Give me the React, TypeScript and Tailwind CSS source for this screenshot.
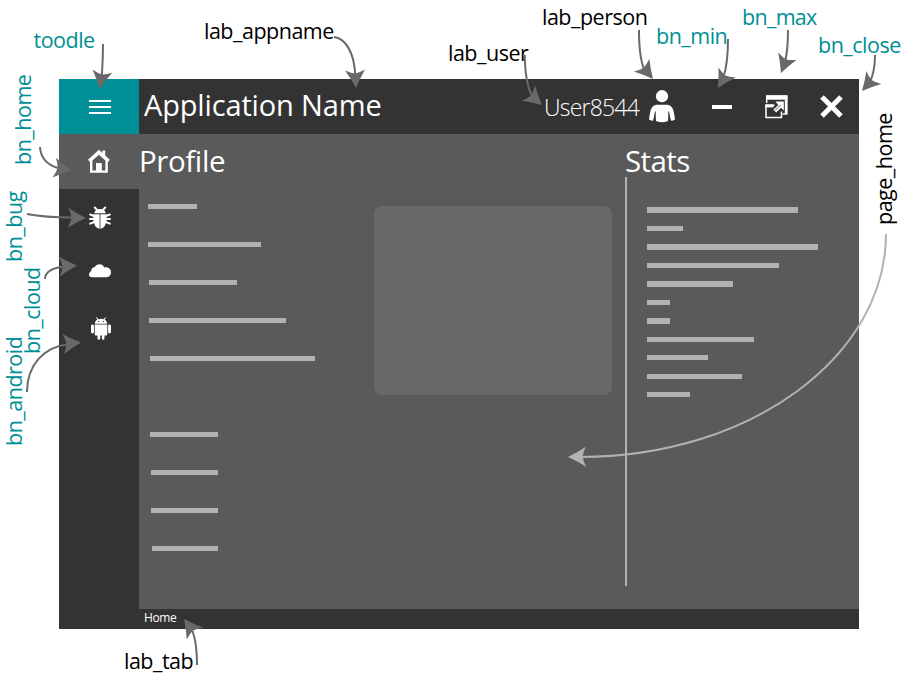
type Bar = { y: number; x: number; end: number };

const profileBars: Bar[] = [
  { y: 204, x: 147.6, end: 196.6 },
  { y: 242, x: 148, end: 260.6 },
  { y: 280, x: 148.6, end: 236.6 },
  { y: 318, x: 149, end: 285.6 },
  { y: 356, x: 149.6, end: 314.6 },
  { y: 432, x: 150.4, end: 217.6 },
  { y: 470, x: 151, end: 217.6 },
  { y: 508, x: 151.4, end: 217.6 },
  { y: 546, x: 152, end: 217.6 },
];

const statWidths = [151, 35.6, 170.6, 131.6, 85.6, 22.6, 22.6, 106.6, 60.6, 94.6, 42.6];

const arrows = [
  { line: "M103 44 Q103 60 101.8 76", tip: [99.5, 89], back: [102.3, 72] },
  { line: "M334 37 C345 38 354 52 355.2 74", tip: [356, 88], back: [355, 70.5] },
  { line: "M524.8 55 Q525 82 532 96", tip: [542, 105], back: [529.2, 93.8] },
  { line: "M639 30 Q639 57 644 69", tip: [653, 79], back: [642.3, 66] },
  { line: "M728 39 Q728 63 723.5 77", tip: [718, 88], back: [726.5, 73.5] },
  { line: "M788 30 Q788 48 785.5 60", tip: [781, 73], back: [787, 57.5] },
  { line: "M875 55 Q875 71 870 82", tip: [862, 91], back: [873, 78.5] },
  { line: "M40 147 Q41 163 58 168", tip: [72, 170.5], back: [54, 167.5] },
  { line: "M27 214 Q45 217.5 72 217.5", tip: [86, 218], back: [68, 217.7] },
  { line: "M45 279 Q45 269 64 266.5", tip: [77, 265.5], back: [60.5, 266.5] },
  { line: "M27 392 C27 364 45 347 67 344.5", tip: [81, 342.5], back: [64, 344] },
  { line: "M197 665 Q197 643 192.5 631", tip: [184, 619], back: [194.5, 633] },
];

function Arrow({ line, tip, back, color = "#696969" }: { line: string; tip: number[]; back: number[]; color?: string }) {
  const angle = (Math.atan2(back[1] - tip[1], back[0] - tip[0]) * 180) / Math.PI;
  return (
    <g>
      <path d={line} fill="none" stroke={color} strokeWidth="2" />
      <path
        d="M0 0 Q10 -4.8 18 -10 Q15 -4 14.6 0 Q15 4 18 10 Q10 4.8 0 0Z"
        fill={color}
        transform={`translate(${tip[0]} ${tip[1]}) rotate(${angle})`}
      />
    </g>
  );
}

const teal = "text-[#008f96]";
const labelBase = "absolute whitespace-pre text-[21.5px] leading-[22px] tracking-[-0.5px]";
const labels = [
  ["toodle", `${teal} left-[33.5px] top-[29px] tracking-[-0.2px]`],
  ["lab_appname", "text-black left-[204px] top-[20px]"],
  ["lab_user", "text-black left-[448px] top-[42px]"],
  ["lab_person", "text-black left-[542px] top-[6px]"],
  ["bn_min", `${teal} left-[656px] top-[25px]`],
  ["bn_max", `${teal} left-[742px] top-[6px] tracking-[-0.7px]`],
  ["bn_close", `${teal} left-[818px] top-[34px]`],
  ["lab_tab", "text-black left-[124px] top-[650px]"],
  ["bn_home", `${teal} left-[12px] top-[165px] origin-top-left -rotate-90`],
  ["bn_bug", `${teal} left-[3px] top-[262px] origin-top-left -rotate-90`],
  ["bn_cloud", `${teal} left-[21px] top-[354px] origin-top-left -rotate-90`],
  ["bn_android", `${teal} left-[3px] top-[446px] origin-top-left -rotate-90`],
  ["page_home", "text-black left-[873px] top-[225px] origin-top-left -rotate-90"],
];

function HomeIcon() {
  return (
    <svg width="22" height="24" viewBox="0 0 22 24" fill="white">
      <path d="M10.9 .8 14.4 4V1.5h2.8v5.1l4.6 4.2-1.6 2L10.9 4.4 1.6 12.8 0 10.8Z" />
      <path fillRule="evenodd" d="M2 11.6 10.9 3.6l8.9 8V23.8H2ZM4.4 11.6V21.6H8V14.2h5.6v7.4h3.8V11.6L10.9 5.8Z" />
      <path d="M8 14.2h5.6V22H8z" />
    </svg>
  );
}

function BugIcon() {
  return (
    <svg width="22" height="23" viewBox="0 0 22 23" fill="none" stroke="white">
      <path d="M8.2 4.2 5.8 1.5M13.8 4.2l2.4-2.7" strokeWidth="2" strokeLinecap="round" />
      <path d="M5.2 7.3Q6 3 11 3t5.8 4.3Z" fill="white" stroke="none" />
      <path d="M10.6 8.2v14.6C6 22 3.9 17 4.3 8.2ZM11.4 8.2v14.6C16 22 18.1 17 17.7 8.2Z" fill="white" stroke="none" />
      <path d="M5 10 1.2 8.5M5 13H1M5.2 16 1.2 17.6M17 10l3.8-1.5M17 13h4M16.8 16l4 1.6" strokeWidth="2" strokeLinecap="round" />
    </svg>
  );
}

function CloudIcon() {
  return (
    <svg width="22" height="14" viewBox="0 0 22 14" fill="white">
      <path d="M3 13.2C1 13.2 0 12.4 0 10.8 0 9 1 8 2.1 7.3 2 5 3.4 3.2 5.6 3.2 7 1.2 8.5.3 10.6.3c2.2 0 3.6 1 4.6 3.1 3.4-.7 6.8 1.3 6.8 4.7 0 3.2-1.7 5.1-4.4 5.1Z" />
    </svg>
  );
}

function AndroidIcon() {
  return (
    <svg width="20" height="23" viewBox="0 0 20 23" fill="white">
      <path d="M3.8 6.7C4 4.7 5 3.3 6.3 2.5L5 .7l.8-.4 1.4 1.9q2.8-.8 5.6 0L14.2.3l.8.4-1.3 1.8c1.4.8 2.3 2.2 2.5 4.2Z" />
      <path d="M3.7 7.6h12.6v9.3c0 1-.6 1.7-1.5 1.7h-1.3v2.7q0 1.5-1.3 1.5t-1.4-1.5v-2.7H9.2v2.7q0 1.5-1.4 1.5t-1.3-1.5v-2.7H5.2c-.9 0-1.5-.7-1.5-1.7Z" />
      <rect x="0" y="7.6" width="2.9" height="8.8" rx="1.4" />
      <rect x="17.1" y="7.6" width="2.9" height="8.8" rx="1.4" />
      <path d="M7 4h1v1H7zM12 4h1v1h-1z" fill="#333" />
    </svg>
  );
}

function PersonIcon() {
  return (
    <svg width="26" height="33" viewBox="0 0 26 33" fill="white">
      <circle cx="13" cy="6.2" r="6.1" />
      <path d="M8 14.8h10c4 0 6.3 3.5 7 8.5q.7 3.5 1 6.2-2 1.2-4 1.3L19.7 22 19 31q-6 2.7-12 0L6.3 22 4 30.8Q2 30.7 0 29.5.3 26.8 1 23.3c.7-5 3-8.5 7-8.5Z" />
      <path d="M6.3 21.5 5.5 31M19.7 21.5l.8 9.5" stroke="#333" strokeWidth=".9" />
    </svg>
  );
}

function PopOutIcon() {
  return (
    <svg width="23" height="24" viewBox="0 0 23 24" fill="none" stroke="white">
      <path d="M1.7 8V1h20v18h-4" strokeWidth="1.4" />
      <path d="M1 .5h21.5v4.2H1z" fill="white" stroke="none" />
      <path d="M19.8 4.5v14.6h2.6V4.5Z" fill="white" stroke="none" />
      <path d="M9.5 10.2H1v12.3h15.5v-6" strokeWidth="1.5" />
      <path d="M.3 9.4h8.2v3H.3z" fill="white" stroke="none" />
      <path d="M10.4 6.5h8.4v8.9l-2.7-2.6-5 4.8-2.8-2.8 5-4.9Z" fill="white" stroke="none" />
      <path d="M10 15.6 15.8 9.8" stroke="#333" strokeWidth=".8" />
    </svg>
  );
}

export default function App() {
  return (
    <div className="relative h-[693px] w-[921px] bg-white pt-[79px] pl-[59px] font-['Open_Sans','Noto_Sans',sans-serif]">
      <div className="flex h-[550px] w-[800px] flex-col bg-[#333333] text-white">
        <header className="flex h-[55px] shrink-0">
          <button className="flex w-20 flex-col items-center justify-center gap-1 bg-[#008f96] pt-px pl-0.5">
            <span className="h-0.5 w-[22px] bg-white" />
            <span className="h-0.5 w-[22px] bg-white" />
            <span className="h-0.5 w-[22px] bg-white" />
          </button>
          <h1 className="w-[405px] pl-[5px] text-[29px] leading-[51px] tracking-[-0.15px] whitespace-nowrap">Application Name</h1>
          <span className="w-[105px] text-[23px] leading-[56px] font-light tracking-[-0.8px]">User8544</span>
          <div className="flex w-[62px] pt-[11px]"><PersonIcon /></div>
          <div className="w-[52px] pt-[26px] pl-px"><div className="h-1 w-5 bg-white" /></div>
          <div className="w-[56px] pt-4 pl-[2px]"><PopOutIcon /></div>
          <svg className="mt-4" width="24" height="24" viewBox="0 0 24 24"><path d="M3 2 22 21M22 2 3 21" stroke="white" strokeWidth="5" /></svg>
        </header>
        <div className="flex h-[475px]">
          <nav className="flex w-20 flex-col">
            <div className="flex h-[55px] justify-center bg-[#5a5a5a] pt-[15px]"><HomeIcon /></div>
            <div className="flex h-[55px] justify-center pt-[17px] pl-0.5"><BugIcon /></div>
            <div className="flex h-[55px] justify-center pt-5 pl-0.5"><CloudIcon /></div>
            <div className="flex h-[55px] justify-center pt-[18px] pl-1"><AndroidIcon /></div>
          </nav>
          <main className="flex w-[720px] bg-[#5a5a5a]">
            <section className="flex w-[235px] flex-col">
              <h2 className="h-[70px] pt-[7px] text-[29.5px] leading-[40px] tracking-[-0.4px]">Profile</h2>
              {profileBars.map((bar, i) => (
                <div
                  key={bar.y}
                  className="h-[5px] bg-[#b2b2b2]"
                  style={{ width: bar.end - bar.x, marginLeft: bar.x - 139, marginTop: i === 0 ? 0 : bar.y - profileBars[i - 1].y - 5 }}
                />
              ))}
            </section>
            <div className="mt-[72px] h-[189px] w-[238px] rounded-lg bg-[#686868]" />
            <section className="ml-[13px] flex flex-1 flex-col">
              <h2 className="h-[43px] pt-[7px] text-[29.5px] leading-[40px] tracking-[-0.6px]">Stats</h2>
              <div className="h-[409px] border-l-2 border-[#b2b2b2] pt-[30.3px] pl-5">
                {statWidths.map((width, i) => (
                  <div key={i} className="mb-[13.2px] h-[5.3px] bg-[#b2b2b2]" style={{ width }} />
                ))}
              </div>
            </section>
          </main>
        </div>
        <footer className="h-5 pl-[85px] text-[12px] leading-[18px] tracking-[-0.4px]">Home</footer>
      </div>
      {labels.map(([text, place]) => (
        <span key={text} className={`${labelBase} ${place}`}>{text}</span>
      ))}
      <svg className="absolute top-0 left-0" width="921" height="693">
        {arrows.map((a) => (
          <Arrow key={a.line} {...a} />
        ))}
        <Arrow line="M886 234 C886 356 751 457 580 457" tip={[568, 457]} back={[586, 456.7]} color="#b2b2b2" />
      </svg>
    </div>
  );
}
